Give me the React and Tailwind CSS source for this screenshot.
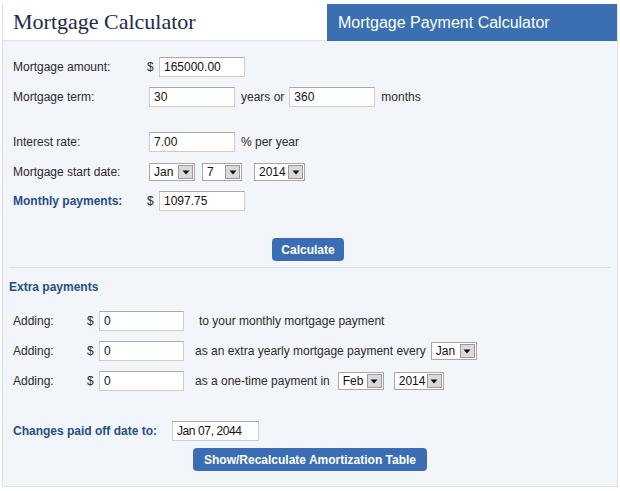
import React from "react";

const font = { fontFamily: '"Liberation Sans", Arial, sans-serif' };

function Input({ value, w, className = "" }) {
  return (
    <input
      readOnly
      value={value}
      className={`h-[20px] border border-[#cdcdcd] border-t-[#a9a9a9] bg-white px-[4px] text-[12px] text-[#111] outline-none ${className}`}
      style={{ width: w, ...font }}
    />
  );
}

function Select({ value, w }) {
  return (
    <div
      className="flex h-[18px] items-center border border-[#a7a7a7] bg-white pl-[4px] pr-[1px] text-[12px] text-[#111]"
      style={{ width: w }}
    >
      <span className="flex-1 leading-none">{value}</span>
      <span className="flex h-[14px] w-[15px] items-center justify-center border border-[#9a9a9a] bg-[#dadada]">
        <svg width="8" height="5" viewBox="0 0 8 5">
          <path d="M0.5 0.5 L7.5 0.5 L4 4.5 Z" fill="#111" />
        </svg>
      </span>
    </div>
  );
}

function Label({ children, blue }) {
  return (
    <span
      className={`w-[134px] shrink-0 text-[12px] ${blue ? "font-bold text-[#1f4f86]" : "text-[#2b2b2b]"}`}
    >
      {children}
    </span>
  );
}

export default function App() {
  return (
    <div className="h-[491px] w-[620px] bg-white" style={font}>
      <div className="ml-[2px] mt-[4px] w-[616px] border border-t-0 border-[#dbe2ee]">
        <div className="flex h-[37px]">
          <div className="flex w-[324px] items-center border-b border-[#dbe2ee] bg-white pl-[10px]">
            <span
              className="text-[22px] leading-none text-[#1c2b4a]"
              style={{ fontFamily: '"Liberation Serif", "Times New Roman", serif' }}
            >
              Mortgage Calculator
            </span>
          </div>
          <div className="flex flex-1 items-center bg-[#3a6fb1] pl-[11px]">
            <span className="text-[16px] text-white">Mortgage Payment Calculator</span>
          </div>
        </div>
        <div className="h-[445px] bg-[#f2f5fa] pt-[16px] text-[12px] text-[#2b2b2b]">
          <div className="pl-[10px]">
            <div className="flex h-[20px] items-center">
              <Label>Mortgage amount:</Label>
              <span className="w-[12px]">$</span>
              <Input value="165000.00" w={86} />
            </div>
            <div className="mt-[10px] flex h-[20px] items-center">
              <Label>Mortgage term:</Label>
              <Input value="30" w={86} className="ml-[2px]" />
              <span className="ml-[6px]">years or</span>
              <Input value="360" w={86} className="ml-[5px]" />
              <span className="ml-[6px]">months</span>
            </div>
            <div className="mt-[25px] flex h-[20px] items-center">
              <Label>Interest rate:</Label>
              <Input value="7.00" w={86} className="ml-[2px]" />
              <span className="ml-[6px]">% per year</span>
            </div>
            <div className="mt-[10px] flex h-[20px] items-center">
              <Label>Mortgage start date:</Label>
              <div className="ml-[2px] flex items-center">
                <Select value="Jan" w={46} />
                <div className="ml-[7px]">
                  <Select value="7" w={40} />
                </div>
                <div className="ml-[12px]">
                  <Select value="2014" w={51} />
                </div>
              </div>
            </div>
            <div className="mt-[9px] flex h-[20px] items-center">
              <Label blue>Monthly payments:</Label>
              <span className="w-[12px]">$</span>
              <Input value="1097.75" w={86} />
            </div>
          </div>
          <div className="mt-[27px] flex justify-center pr-[4px]">
            <button className="h-[23px] w-[72px] rounded-[4px] bg-[#3b6db5] text-[12px] font-bold text-white">
              Calculate
            </button>
          </div>
          <div className="mx-[6px] mt-[6px] h-px bg-[#d8dfea]" />
          <div className="mt-[12px] pl-[6px] text-[12px] font-bold leading-[14px] text-[#1f4f86]">
            Extra payments
          </div>
          <div className="mt-[17px] pl-[10px]">
            <div className="flex h-[20px] items-center">
              <span className="w-[74px]">Adding:</span>
              <span className="w-[12px]">$</span>
              <Input value="0" w={85} />
              <span className="ml-[15px]">to your monthly mortgage payment</span>
            </div>
            <div className="mt-[10px] flex h-[20px] items-center">
              <span className="w-[74px]">Adding:</span>
              <span className="w-[12px]">$</span>
              <Input value="0" w={85} />
              <span className="ml-[11px]">as an extra yearly mortgage payment every</span>
              <div className="ml-[5px]">
                <Select value="Jan" w={46} />
              </div>
            </div>
            <div className="mt-[10px] flex h-[20px] items-center">
              <span className="w-[74px]">Adding:</span>
              <span className="w-[12px]">$</span>
              <Input value="0" w={85} />
              <span className="ml-[11px]">as a one-time payment in</span>
              <div className="ml-[8px]">
                <Select value="Feb" w={46} />
              </div>
              <div className="ml-[10px]">
                <Select value="2014" w={50} />
              </div>
            </div>
            <div className="mt-[30px] flex h-[20px] items-center">
              <span className="w-[159px] font-bold text-[#1f4f86]">Changes paid off date to:</span>
              <Input value="Jan 07, 2044" w={87} className="tracking-[-0.4px]" />
            </div>
          </div>
          <div className="mt-[7px] flex pl-[190px]">
            <button className="h-[23px] w-[234px] rounded-[4px] bg-[#3b6db5] text-[12px] font-bold text-white">
              Show/Recalculate Amortization Table
            </button>
          </div>
        </div>
      </div>
    </div>
  );
}
